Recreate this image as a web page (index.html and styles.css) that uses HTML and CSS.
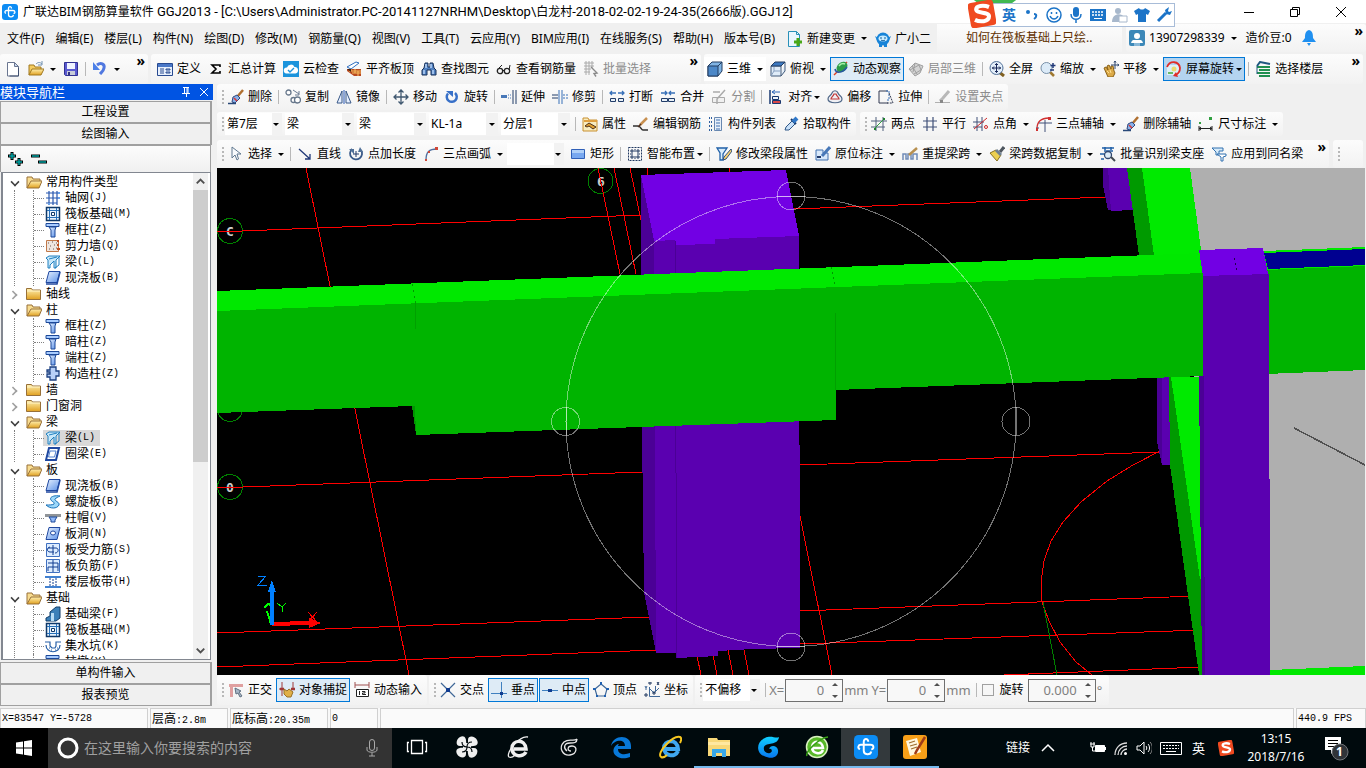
FILE: index.html
```html
<!DOCTYPE html>
<html lang="zh-CN">
<head>
<meta charset="utf-8">
<title>广联达BIM钢筋算量软件 GGJ2013</title>
<link rel="stylesheet" href="styles.css">
</head>
<body>
<svg class="sprite" aria-hidden="true">
<defs>
<linearGradient id="gold" x1="0" y1="0" x2="0" y2="1"><stop offset="0" stop-color="#fff0b0"/><stop offset="1" stop-color="#e0a020"/></linearGradient>
<linearGradient id="sky" x1="0" y1="0" x2="1" y2="1"><stop offset="0" stop-color="#e8f2ff"/><stop offset="1" stop-color="#5a90e8"/></linearGradient>
<linearGradient id="flame" x1="0" y1="0" x2="0" y2="1"><stop offset="0" stop-color="#10d0ff"/><stop offset="1" stop-color="#0878f0"/></linearGradient>
</defs>
<symbol id="app" viewBox="0 0 16 16"><rect width="16" height="16" rx="3" fill="#0c8cf4"/><path d="M9.500 4.500c0-2.500-3-2.500-3 0v6c0 3 4.500 3 5 .5M4 9.500c-2-1-1-3 .5-3H11c2.500 0 2.500 3 .5 3" fill="none" stroke="#fff" stroke-width="1.300"/></symbol>
<symbol id="new" viewBox="0 0 16 16"><path d="M2.500 1.500h7l4 4v9.500h-11z" fill="#fff" stroke="#6a7690"/><path d="M9.500 1.500v4h4z" fill="#c8d8f0" stroke="#6a7690"/><path d="M13.500 7v8h-9" fill="none" stroke="#405070"/></symbol>
<symbol id="open" viewBox="0 0 16 16"><path d="M1 14V4h5l1 2h6v2" fill="#f4cc60" stroke="#a07820"/><path d="M1 14 4 8h12l-3 6z" fill="url(#gold)" stroke="#a07820"/><path d="M8 3c2-2 4-2 6 0M14 0v4h-4" fill="none" stroke="#7090b0"/></symbol>
<symbol id="save" viewBox="0 0 16 16"><path d="M1.500 1.500h13v13h-12l-1-1z" fill="#5a5ad0" stroke="#303090"/><path d="M4 2h8v6H4z" fill="#f0f4ff"/><path d="M4 10h8v4H4z" fill="#c8ccd8"/><path d="M5 11h2v3H5z" fill="#303080"/></symbol>
<symbol id="undo" viewBox="0 0 16 16"><path d="M5 4c4-3 8-1 7 3-.5 3-2 4-4 6" fill="none" stroke="#5078e0" stroke-width="3"/><path d="M1 1v8h7z" fill="#4c80e8"/></symbol>
<symbol id="define" viewBox="0 0 16 16"><path d="M.5 2.500h15v12H.5z" fill="#e8f0fc" stroke="#284a90"/><path d="M1 3h14v3H1z" fill="#4a78c8"/><path d="M3 8h4M3 10h4M3 12h4M9 8h4v1H9zM9 11h4v1H9z" stroke="#284a90" fill="none"/></symbol>
<symbol id="sum" viewBox="0 0 16 16"><path d="M12 6V4H4l4 4-4 4h8v-2" fill="none" stroke="#000" stroke-width="1.600"/></symbol>
<symbol id="cloud" viewBox="0 0 16 16"><path d="M0 0h16v16H0z" fill="#1c94dc"/><path d="M3.500 12.500a3 3 0 0 1 .5-6 4 4 0 0 1 7.500-.5 3.300 3.300 0 0 1 1 6.500z" fill="#fff"/><path d="m5 9 2 2 4-4" fill="none" stroke="#1c94dc" stroke-width="1.400"/></symbol>
<symbol id="flatten" viewBox="0 0 16 16"><path d="m1 6 9-5 3 1-8 6z" fill="#fff" stroke="#3070c0"/><path d="M1 8h14v7H8l-7-5z" fill="#b84820"/><path d="M3 10h12M6 12h9M5 8v2M9 8v4M12 10v5" stroke="#f8c060"/><path d="M1 8h4v3z" fill="#402010"/></symbol>
<symbol id="find" viewBox="0 0 16 16"><path d="M4 2h3v4h2V2h3l1 5 2 2v5h-5V9H6v5H1V9l2-2z" fill="#5080c0" stroke="#183058"/><path d="M3 9v4M12 9v4M5 3v4M10 3v4" stroke="#b8d4f8" stroke-width="1.500"/></symbol>
<symbol id="glasses" viewBox="0 0 16 16"><circle cx="4" cy="10" r="2.700" fill="none" stroke="#222" stroke-width="1.300"/><circle cx="11" cy="10" r="2.700" fill="none" stroke="#222" stroke-width="1.300"/><path d="M7 9.500h1.500M3 7l3-3M13 9l1-5" stroke="#222" fill="none"/></symbol>
<symbol id="batch" viewBox="0 0 16 16"><path d="M1 2h10M1 5h10M1 8h7M1 11h6M3 0v14M6 0v14M9 0v7" stroke="#aaa" fill="none"/><path d="m8 6 6 6-3 .5 2 3" fill="none" stroke="#888" stroke-width="1.400"/></symbol>
<symbol id="cube" viewBox="0 0 16 16"><path d="m1 5 4-4h10v9l-4 5H1z" fill="#80b4e4" stroke="#223c60"/><path d="m1 5h10v10H1z" fill="#4c88c8" stroke="#223c60"/><path d="m11 5 4-4" stroke="#223c60"/></symbol>
<symbol id="topview" viewBox="0 0 16 16"><path d="M1 5v10h10V5zM11 15l4-5V1" fill="#e0ecf8" stroke="#405878"/><path d="m1 5 4-4h10l-4 4z" fill="#3c78c0" stroke="#223c60"/><path d="M4 6v4h6M4 10l-3 5" fill="none" stroke="#88a0c0"/></symbol>
<symbol id="orbit" viewBox="0 0 16 16"><path d="M1 14 14 1" stroke="#e04020" stroke-width="1.500"/><ellipse cx="9" cy="6" rx="6" ry="4.500" transform="rotate(-40 9 6)" fill="#2c9c48"/><path d="M2 8c1 5 8 4 12-2" fill="none" stroke="#2858a0" stroke-width="1.500"/><path d="M6 5c2-3 4-3 6-2" stroke="#a8f0a8" stroke-width="1.500" fill="none"/></symbol>
<symbol id="local3d" viewBox="0 0 16 16"><path d="m1 8 6-6 8 3-3 7-5 3z" fill="#d4d4d4" stroke="#a0a0a0"/><path d="m4 5 5 8M7 2l-2 9M2 9l9-5 2 5-7 4" fill="none" stroke="#a0a0a0"/></symbol>
<symbol id="full" viewBox="0 0 16 16"><path d="m10 11 5 4" stroke="#806020" stroke-width="3"/><circle cx="7.500" cy="7" r="6.500" fill="#e4effa" stroke="#507098"/><path d="M7.500 2.500v9M3 7h9m-6-3 1.500-1.500L9 4m-3 6 1.500 1.500L9 10M5 5.500 3.500 7 5 8.500m5-3L11.500 7 10 8.500" fill="none" stroke="#182858" stroke-width="1"/></symbol>
<symbol id="zoomer" viewBox="0 0 16 16"><path d="m10 11 4 4" stroke="#a07830" stroke-width="2.500"/><circle cx="6.500" cy="7" r="5.500" fill="#dcebf8" stroke="#7890a8"/><path d="M13 2v5M10.500 4.500h5M10 9h4" stroke="#203878" stroke-width="1.500"/></symbol>
<symbol id="pan" viewBox="0 0 16 16"><path d="m1 7 2-1 2 3-1-4 2-1 2 4 0-3 2 0 1 5 1 2-2 4H5z" fill="#dcaa48" stroke="#886018"/><path d="m4 10 2 2M7 9l1 3" stroke="#ffe090"/><path d="M12 0v8M8 4h8m-5-2.500L12 0l1 1.500m1.500 1.500L16 4l-1.500 1" stroke="#304870" fill="none"/></symbol>
<symbol id="screenrot" viewBox="0 0 16 16"><path d="M1 4h13v10H1z" fill="#dcf0f8"/><path d="M1 6C4-1 13 0 14 7c0 4-2 6-5 7" fill="none" stroke="#e02c28" stroke-width="1.800"/><path d="m10 11-3 4 5 1z" fill="#e02c28"/><circle cx="8" cy="8" r="2.500" fill="#ecd870"/><path d="M2 11h5v2H2z" fill="#68b868"/></symbol>
<symbol id="floors" viewBox="0 0 16 16"><path d="m2 5 3-4 10 2" fill="none" stroke="#205880" stroke-width="2"/><path d="M2 6h13M4 9h11M2 12h13M4 15h11" stroke="#209050" stroke-width="1.800"/><path d="M2 5v8" stroke="#205880"/></symbol>
<symbol id="erase" viewBox="0 0 16 16"><path d="m15 1-6 7" stroke="#b07030" stroke-width="2.500"/><path d="m5 8 4-2 3 3-5 5-3-1z" fill="#88b0e8" stroke="#304880"/><path d="M6 9l3 3" stroke="#d83838" stroke-width="1.500"/><path d="M0 14.500h8" stroke="#284878" stroke-width="1.500"/></symbol>
<symbol id="copy" viewBox="0 0 16 16"><g fill="#fff" stroke="#68788c" stroke-width="1.300"><circle cx="3.500" cy="3.500" r="2.500"/><circle cx="8.500" cy="11" r="2.500"/><circle cx="12.500" cy="11" r="3"/></g><path d="m8 1 6 4m0-3v4h-4" fill="none" stroke="#687890"/></symbol>
<symbol id="mirror" viewBox="0 0 16 16"><path d="M6 2v12H1zM10 2v12h5z" fill="#e8f0ff" stroke="#385888"/><path d="M8 1v14" stroke="#2858b8"/></symbol>
<symbol id="move" viewBox="0 0 16 16"><path d="M8 1v14M1 8h14M5.500 3.500 8 1l2.500 2.500m-5 9L8 15l2.500-2.500m-7-7L1 8l2.500 2.500m9-5L15 8l-2.500 2.500" fill="none" stroke="#405870" stroke-width="1.300"/></symbol>
<symbol id="rotate" viewBox="0 0 16 16"><path d="M4 4.500a5 5 0 1 0 7-.5" fill="none" stroke="#3870c8" stroke-width="2.500"/><path d="M2 2h7v6z" fill="#3870c8"/></symbol>
<symbol id="extend" viewBox="0 0 16 16"><path d="M0 6h6v3H0z" fill="#4878b8"/><path d="M7 6h4M7 9h4" stroke="#4878b8" stroke-dasharray="1 1"/><path d="M12 1v14M15 1v14" stroke="#203c68"/></symbol>
<symbol id="trim" viewBox="0 0 16 16"><path d="M0 6h6M0 9h6" stroke="#203c68"/><path d="M7 1v14M10 1v14" stroke="#3870b8"/><path d="M11 6h5M11 9h5" stroke="#3870b8" stroke-dasharray="2 1"/></symbol>
<symbol id="break" viewBox="0 0 16 16"><path d="M1 4h6M9 4h6M3 2 1 4l2 2m10-4 2 2-2 2" fill="none" stroke="#3870b8" stroke-width="1.300"/><path d="M1.500 9.500h5v3h-5zM9.500 9.500h5v3h-5z" fill="#e8f0f8" stroke="#203c68"/></symbol>
<symbol id="join" viewBox="0 0 16 16"><path d="M1 4h6M9 4h6M5 2l2 2-2 2m6-4L9 4l2 2" fill="none" stroke="#3870b8" stroke-width="1.300"/><path d="M1.500 9.500h6v3h-6zM8.500 9.500h6v3h-6z" fill="#e8f0f8" stroke="#203c68"/></symbol>
<symbol id="split" viewBox="0 0 16 16"><path d="M1.500 8.500h12v5h-12z" fill="#f0f0f0" stroke="#aaa"/><path d="M14 1 6 10v5M2 3h7" stroke="#aaa" stroke-width="1.500" fill="none"/></symbol>
<symbol id="align" viewBox="0 0 16 16"><path d="M2 1v14" stroke="#183870" stroke-width="1.500"/><path d="M12 3H4m3-2L4 3l3 2" fill="none" stroke="#3068b8"/><path d="M4.500 7.500h6v3h-6z" fill="#f0f4fa" stroke="#183870"/><path d="M4.500 11.500h8v3h-8z" fill="#d84848" stroke="#183870"/></symbol>
<symbol id="offset" viewBox="0 0 16 16"><path d="M1 10c0-3 3-3 4-6 1-3 5-3 6 0 1 3 4 3 4 6 0 5-14 5-14 0z" fill="#f0f0f4" stroke="#506888" stroke-width="1.200"/><path d="M4 10c0-2 2-2 3-5h2c1 3 3 3 3 5z" fill="none" stroke="#c03838" stroke-width="1.200"/></symbol>
<symbol id="stretch" viewBox="0 0 16 16"><path d="M10 2H1v12h9" fill="none" stroke="#303850"/><path d="M8 2h3v9H8" fill="none" stroke="#3870b8" stroke-dasharray="2 1"/><path d="m11 4 4 10H9" fill="none" stroke="#303850" stroke-dasharray="2 1"/></symbol>
<symbol id="grip" viewBox="0 0 16 16"><path d="M14 2 8 9l-3 3" stroke="#b8b8b8" stroke-width="3"/><path d="M0 13.500h5M8 13.500h7" stroke="#b0b0b0"/><path d="M5 11h3v3H5z" fill="#888"/></symbol>
<symbol id="props" viewBox="0 0 16 16"><path d="M1 2h5l1 2h8v11H1z" fill="#f8ecc0" stroke="#c89030"/><path d="M2 5h13" stroke="#e0a040" stroke-width="2"/><path d="m3 10 4-3 7 4-3 2-4-3-2 1z" fill="#e0a030" stroke="#503018"/></symbol>
<symbol id="editbar" viewBox="0 0 16 16"><path d="M0 10h5c3 0 3 4 5 4h5" fill="none" stroke="#303030" stroke-width="1.500"/><path d="m14 2-7 7" stroke="#c89050" stroke-width="2.500"/><path d="m8 8-3 3" stroke="#503020" stroke-width="1.500"/></symbol>
<symbol id="complist" viewBox="0 0 16 16"><path d="M1 2h3M1 6h3M1 10h3M1 14h3" stroke="#3060a0" stroke-width="2" stroke-dasharray="1 1"/><path d="M6.500 1.500h7v13h-7z" fill="#e8f0fa" stroke="#6888b0"/><path d="M8 4h4M8 7h4M8 10h4M8 13h4" stroke="#4070b0"/></symbol>
<symbol id="dropper" viewBox="0 0 16 16"><path d="m2 14 1-3 6-6 3 3-6 6z" fill="#c8e0f8" stroke="#305888"/><path d="m8 3 5 5" stroke="#183868" stroke-width="2"/><path d="m10 6 4-4" stroke="#3078c8" stroke-width="4"/></symbol>
<symbol id="twopt" viewBox="0 0 16 16"><path d="M0 5h16M0 11h14M5 1v14M12 1v14" stroke="#50607c"/><path d="M3 13 13 3" stroke="#30a040"/><path d="M3 12h2v2H3zM12 2h2v2h-2z" fill="#208030"/></symbol>
<symbol id="parallel" viewBox="0 0 16 16"><path d="M1 5h14M1 11h14M5 1v14M11 1v14" stroke="#405078" stroke-width="1.200"/></symbol>
<symbol id="angle" viewBox="0 0 16 16"><path d="M0 6h11M0 11h9M4 1v14M9 1v14" stroke="#405078"/><path d="M1 13 14 2" stroke="#d02828"/><circle cx="13" cy="11" r="1.500" fill="none" stroke="#d02828"/></symbol>
<symbol id="arcaxis" viewBox="0 0 16 16"><path d="M1 13C1 6 5 2 13 2" fill="none" stroke="#d03030" stroke-width="1.300"/><path d="M3 7h13M9 4v12M0 12h3" stroke="#405078"/><path d="M12 1h3v3h-3zM0 12h2v3H0z" fill="#d03030"/></symbol>
<symbol id="dim" viewBox="0 0 16 16"><path d="M1 10v5M14 10v5M1 12.500h13M3 11l-2 1.500L3 14m9-3 2 1.500-2 1.500" fill="none" stroke="#222"/><path d="M11 1h3v3h-3zM1 6h2v2H1z" fill="#30a040"/></symbol>
<symbol id="cursor" viewBox="0 0 16 16"><path d="M4 1v11l3-3 2 5 1.500-1L9 8h4z" fill="#f8fafc" stroke="#607890"/></symbol>
<symbol id="line" viewBox="0 0 16 16"><path d="m2 3 11 10m0-5v5H8" fill="none" stroke="#203878" stroke-width="1.300"/></symbol>
<symbol id="ptlen" viewBox="0 0 16 16"><path d="M4 3a6 6 0 1 0 9 1" fill="none" stroke="#385888" stroke-width="1.800"/><path d="M1 3h5v5M10 6h5l-3-5z" fill="#507098"/><path d="M8 5v6M5 8h6" stroke="#203868"/></symbol>
<symbol id="arc" viewBox="0 0 16 16"><path d="M3 14C3 6 6 3 14 3" fill="none" stroke="#5070a0" stroke-width="1.300"/><path d="M2 13h2v2H2zM5 5h2v2H5zM12 1h3v3h-3z" fill="#d04838"/></symbol>
<symbol id="rect" viewBox="0 0 16 16"><path d="M1.500 3.500h13v9h-13z" fill="#78a8f0" stroke="#3060b8"/><path d="M2 4h12v3H2z" fill="#b0d0f8"/></symbol>
<symbol id="smart" viewBox="0 0 16 16"><path d="M1.500 1.500h13v13h-13z" fill="none" stroke="#203860" stroke-dasharray="2 1"/><path d="M8 3v3M8 10v3M3 8h3M10 8h3M4 4h2v2H4zM10 4h2v2h-2zM4 10h2v2H4zM10 10h2v2h-2z" stroke="#203860" fill="none"/></symbol>
<symbol id="modseg" viewBox="0 0 16 16"><path d="M1 2h10L7 8v6H4V7z" fill="#d8ecfa" stroke="#2060a8" stroke-width="1.300"/><path d="M15 3 8 11l-1 3 3-1 6-8z" stroke="#305078" fill="#f8d070"/></symbol>
<symbol id="inplace" viewBox="0 0 16 16"><path d="M1 4h7v3h5v7H1z" fill="#d8e8fa" stroke="#4070b0"/><path d="m15 1-8 9" stroke="#4878b8" stroke-width="3"/><path d="M2 11h4" stroke="#203868" stroke-width="2"/></symbol>
<symbol id="relift" viewBox="0 0 16 16"><path d="M1 14V8h3v5h2V8h3v5h2V8h4v6" fill="none" stroke="#708cb8" stroke-width="1.500"/><path d="m15 2-8 7" stroke="#b89050" stroke-width="2.500"/></symbol>
<symbol id="brush" viewBox="0 0 16 16"><path d="m15 1-4 5" stroke="#505860" stroke-width="3"/><path d="m7 4 5 5-4 6-7-8z" fill="#ecd050" stroke="#887020"/><path d="m7 4 5 5" stroke="#708090" stroke-width="3"/></symbol>
<symbol id="recog" viewBox="0 0 16 16"><path d="M2 2h12M4 5h9M0 8h4M1 13h3M5 1v3M11 1v3" stroke="#2060a8" stroke-width="1.500"/><circle cx="8" cy="9" r="3.500" fill="#dcecf8" stroke="#304870" stroke-width="1.300"/><path d="m11 11 4 4" stroke="#404850" stroke-width="2"/></symbol>
<symbol id="apply" viewBox="0 0 16 16"><path d="M1 2h11v3H8v4H5V6z" fill="#d8ecfa" stroke="#3070b0"/><path d="M6 8h9v2l-3 1v4h-2v-4z" fill="#fff" stroke="#3070b0"/></symbol>
<symbol id="newchg" viewBox="0 0 16 16"><path d="M1.500.5h8l3 3v12h-11z" fill="#eaf6ff" stroke="#2890b8"/><path d="M9.500.5v3h3" fill="none" stroke="#2890b8"/><path d="M11 7v8M7 11h8" stroke="#48a818" stroke-width="3"/></symbol>
<symbol id="robot" viewBox="0 0 16 16"><circle cx="8" cy="8" r="6.500" fill="#1884d8"/><path d="M0 5l3 2v5zM16 5l-3 2v5zM4 13h3v3H4zM9 13h3v3H9z" fill="#1884d8"/><ellipse cx="8" cy="7.500" rx="4.500" ry="3" fill="#c8ecff"/><path d="M6 6v2M10 6v2M6 9c1 1 3 1 4 0" stroke="#1060a0" fill="none"/></symbol>
<symbol id="user" viewBox="0 0 16 16"><rect width="16" height="16" rx="2" fill="#3c88b8"/><circle cx="8" cy="6" r="3" fill="#fff"/><path d="M2 13c1-4 3-3 6-3s5-1 6 3z" fill="#fff"/><path d="M5 13h6v3H5z" fill="#88b8d8"/></symbol>
<symbol id="bell" viewBox="0 0 16 16"><path d="M8 0c4 1 4 5 4 8l3 4H1l3-4c0-3 0-7 4-8z" fill="#2090f0"/><path d="M6 13h4l-2 3z" fill="#2090f0"/></symbol>
<symbol id="fold-open" viewBox="0 0 16 16"><path d="M1 14V3h5l1 2h7v3" fill="#f8dc90" stroke="#987038"/><path d="m1 14 4-7h11l-3 7z" fill="url(#gold)" stroke="#987038"/></symbol>
<symbol id="fold" viewBox="0 0 16 16"><path d="M.5 13.500v-11h5l1 1.500h8v9.500z" fill="url(#gold)" stroke="#987038"/><path d="M1 5h13" stroke="#fff4c8"/></symbol>
<symbol id="t-grid" viewBox="0 0 16 16"><path d="M1 3h14M1 8h14M1 13h11M4 1v14M8 1v14M12 1v14" stroke="#2858b0" stroke-width="1.200"/><path d="M13 2h2v2h-2zM13 7h2v2h-2zM3 13h2v2H3z" fill="#68a0e8"/></symbol>
<symbol id="t-raft" viewBox="0 0 16 16"><path d="M1.500 1.500h13v13h-13z" fill="#e8f4ff" stroke="#103868" stroke-width="1.500"/><path d="M4.500 2v12M11.500 2v12M2 4.500h12M2 11.500h12" stroke="#2870b8"/><path d="M6.500 6.500h3v3h-3z" fill="#fff" stroke="#103868"/></symbol>
<symbol id="t-col" viewBox="0 0 16 16"><path d="M1 1.500h13v3H1z" fill="#a8ccff" stroke="#1c4898"/><path d="M4 5h7l-1 3v7H6V8z" fill="url(#sky)" stroke="#1c4898"/></symbol>
<symbol id="t-wall" viewBox="0 0 16 16"><path d="M1.500 2.500h12v11h-12z" fill="#eee6e0" stroke="#c07848"/><path d="M3 5h1M7 4h1M5 8h1M9 7h1M4 11h1M8 11h1M11 10h1M11 5h1" stroke="#705850"/><path d="M12 3h2M12 7h2M12 11h3" stroke="#c05020" stroke-width="2"/></symbol>
<symbol id="t-beam" viewBox="0 0 16 16"><path d="M1 4 4 2h11l-4 4v8H9V7l-4 4v3H3V6z" fill="#c8e8fa" stroke="#2080c0"/><path d="m4 5 8-2M10 14l4-3V3" fill="none" stroke="#2080c0"/></symbol>
<symbol id="t-slab" viewBox="0 0 16 16"><path d="M4 1.500h11l-3 11H1z" fill="url(#sky)" stroke="#2048a0"/><path d="M1 14h11l3-12" fill="none" stroke="#2048a0" stroke-width="1.500"/></symbol>
<symbol id="t-ring" viewBox="0 0 16 16"><path d="M4 2h10l-3 12H1z" fill="#fff" stroke="#2048a0" stroke-width="2"/><path d="M5 5h6l-1.500 6H3.500z" fill="none" stroke="#5080d0"/></symbol>
<symbol id="t-build" viewBox="0 0 16 16"><path d="M5 1h6v4h3v5h-3v4H5v-3H2V8h3V6H2V4h3z" fill="#b8d0f8" stroke="#1c4080" stroke-width="1.300"/></symbol>
<symbol id="t-spiral" viewBox="0 0 16 16"><path d="M15 2C9 1 4 3 6 6c1 2 4 2 3 4-1 1-5 1-8 1 4 4 11 4 13 0 1-3-5-4-4-6 1-1 3-2 5-3z" fill="#9cd8fa" stroke="#1870b8"/></symbol>
<symbol id="t-cap" viewBox="0 0 16 16"><path d="M0 4h16v3H0z" fill="#909498"/><path d="M4 7h8l-2 3v2H6v-2z" fill="#90b8f8" stroke="#1c4898"/></symbol>
<symbol id="t-hole" viewBox="0 0 16 16"><path d="M4 1.500h11l-3 12H1z" fill="url(#sky)" stroke="#2048a0"/><ellipse cx="8" cy="7" rx="2.500" ry="2" fill="#fff" stroke="#2048a0"/></symbol>
<symbol id="t-force" viewBox="0 0 16 16"><path d="M1.500 1.500h13v13h-13z" fill="#dcecff" stroke="#4070c0"/><path d="M3 6h8c3 0 3 5-1 5M5 5c-4 1-3 5 0 5h4M8 3v10" fill="none" stroke="#103c90"/></symbol>
<symbol id="t-neg" viewBox="0 0 16 16"><path d="M1.500 1.500h13v13h-13z" fill="#dcecff" stroke="#4070c0"/><path d="M3 5h10v8M3 9h10M8 2v12M3 9v4" fill="none" stroke="#103c90"/></symbol>
<symbol id="t-strip" viewBox="0 0 16 16"><path d="M0 2h16v2H0zM0 12h16v2H0z" fill="#4080d0"/><path d="M5 4v8M11 4v8M8 5v7" stroke="#103c90" stroke-dasharray="2 1"/></symbol>
<symbol id="t-fbeam" viewBox="0 0 16 16"><path d="M1 15v-3l4-2V6l6-5h4v11l-4 3z" fill="#3c80b8" stroke="#103c68"/><path d="M6 7h3v8H6z" fill="#b8dcf4"/></symbol>
<symbol id="t-pit" viewBox="0 0 16 16"><path d="M0 4h5v4l2 2h3l1-2V4h5M1 7c0 9 14 9 14 0" fill="none" stroke="#2860a8" stroke-width="1.200"/><path d="M4 10h1M6 12h1M10 12h1M12 10h1" stroke="#2860a8"/></symbol>
<symbol id="ortho" viewBox="0 0 16 16"><path d="M1 2h14v3H5v10H2V5H1z" fill="#e0a0a0"/><path d="m7 6 6 3-2 1 3 4-2 1-2-4-2 1z" fill="#a8b8c8" stroke="#607080"/></symbol>
<symbol id="snap" viewBox="0 0 16 16"><path d="M3 0v14M14 0v8M0 7h5" stroke="#a03838"/><path d="M1 7h4M12 7h4" stroke="#a03838" stroke-width="2.500"/><path d="m5 7 3 2 2-2 4 3-2 5H8l-3-3z" fill="#e0b048" stroke="#987028"/></symbol>
<symbol id="dyn" viewBox="0 0 16 16"><path d="M1 0v6M15 0v6M1 3h14" stroke="#a05050"/><path d="M2.500 7.500h12v7h-12z" fill="#fff" stroke="#222"/><path d="M5.500 9v4M8 9.500h3v1.500H8.500v1.500H12" stroke="#222" fill="none"/></symbol>
<symbol id="cross" viewBox="0 0 16 16"><path d="M1 1l14 14M15 1 1 15" stroke="#406898" stroke-width="1.200"/><path d="M6 6h4v4H6z" fill="#103c90"/></symbol>
<symbol id="perp" viewBox="0 0 16 16"><path d="M10.500 0v16M0 11.500h16" stroke="#4080c0"/><path d="M9 10h3v3H9z" fill="#103c90"/></symbol>
<symbol id="mid" viewBox="0 0 16 16"><path d="M0 8.500h16" stroke="#4080c0"/><path d="M6 7h4v3H6z" fill="#103c90"/></symbol>
<symbol id="vertex" viewBox="0 0 16 16"><path d="m8 2 6 5-2 7H4L2 7z" fill="none" stroke="#406898" stroke-width="1.200"/><path d="M7 0h2v3H7zM0 6h3v2H0zM13 6h3v2h-3zM3 13h2v2H3zM11 13h2v2h-2z" fill="#2060b0"/></symbol>
<symbol id="coord" viewBox="0 0 16 16"><path d="M5.500 5v9.500H16M6 7l4 4 5-5M1 4l1 2 1-2M2 6v2M11.500 4v5" fill="none" stroke="#406898"/><path d="M5 0h2v2H5zM1 12h2v2H1zM13 0l2 3M15 0l-2 3M9 10h2v2H9z" stroke="#203860" fill="none"/></symbol>
<symbol id="sogou" viewBox="0 0 24 24"><rect x="1" y="1" width="22" height="22" rx="3" transform="rotate(-10 12 12)" fill="#f04a20"/><path d="M18 6c-5-2-11-1-11 2 0 4 11 2 11 6 0 5-8 5-12 3" fill="none" stroke="#fff" stroke-width="3.500"/></symbol>
</svg>

<header class="title">
 <svg class="ic"><use href="#app"/></svg>
 <h1>广联达BIM钢筋算量软件 <span>GGJ2013 - [C:\Users\Administrator.PC-20141127NRHM\Desktop\</span>白龙村<span>-2018-02-02-19-24-35(2666</span>版<span>).GGJ12]</span></h1>
 <div class="winbtns">
  <button aria-label="最小化"><svg viewBox="0 0 12 12"><path d="M1 6.500h10"/></svg></button>
  <button aria-label="还原"><svg viewBox="0 0 12 12"><path d="M1.500 3.500h7v7h-7zM3.500 3V1.500h7v7H9"/></svg></button>
  <button aria-label="关闭"><svg viewBox="0 0 12 12"><path d="m1 1 10 10M11 1 1 11"/></svg></button>
 </div>
 <span class="orb"></span>
 <div class="ime">
  <svg class="logo"><use href="#sogou"/></svg>
  <b>英</b>
  <svg viewBox="0 0 16 16"><circle cx="4" cy="5" r="2" fill="#1c74c8"/><path d="M10 7c3 0 3 3 0 5" fill="none" stroke="#1c74c8" stroke-width="2"/></svg>
  <svg viewBox="0 0 16 16"><circle cx="8" cy="8" r="7" fill="none" stroke="#1c74c8" stroke-width="1.500"/><path d="M5.500 5v2M10.500 5v2M4 9c2 4 6 4 8 0" fill="none" stroke="#1c74c8" stroke-width="1.500"/></svg>
  <svg viewBox="0 0 16 16"><rect x="5" y="0" width="6" height="10" rx="3" fill="#1c74c8"/><path d="M3 7c0 7 10 7 10 0M8 12v4" fill="none" stroke="#1c74c8" stroke-width="1.500"/></svg>
  <svg viewBox="0 0 16 16"><path d="M0 2h16v12H0z" fill="#1c74c8"/><path d="M2 5h12M2 8h12" stroke="#fff" stroke-width="1.500" stroke-dasharray="2 1"/><path d="M4 11.500h8" stroke="#fff"/></svg>
  <svg viewBox="0 0 16 16"><circle cx="6" cy="4" r="3" fill="#a8b8cc"/><path d="M0 15c0-9 9-9 11-6v6z" fill="#a8b8cc"/><path d="M7 9h8v6H7z" fill="#fff" stroke="#a8b8cc"/></svg>
  <svg viewBox="0 0 16 16"><path d="m0 4 5-3c1 2 5 2 6 0l5 3-2 4-2-1v8H4V7L2 8z" fill="#1c74c8"/></svg>
  <svg viewBox="0 0 16 16"><path d="m2 14 8-8" stroke="#1c74c8" stroke-width="3"/><path d="M13 0 9 3l1 4 4 1 2-4-3 1-1-1z" fill="#1c74c8"/></svg>
 </div>
</header>

<nav class="menu">
 <div class="menus">
 <button>文件(F)</button><button>编辑(E)</button><button>楼层(L)</button><button>构件(N)</button><button>绘图(D)</button><button>修改(M)</button><button>钢筋量(Q)</button><button>视图(V)</button><button>工具(T)</button><button>云应用(Y)</button><button>BIM应用(I)</button><button>在线服务(S)</button><button>帮助(H)</button><button>版本号(B)</button>
 </div>
 <button class="tb"><svg class="ic"><use href="#newchg"/></svg>新建变更<i class="dd far"></i></button>
 <button class="tb"><svg class="ic"><use href="#robot"/></svg>广小二</button>
 <a class="tip" href="#">如何在筏板基础上只绘..</a>
 <div class="panel acct">
  <button class="tb"><svg class="ic"><use href="#user"/></svg>13907298339<i class="dd far"></i></button>
  <button class="tb">造价豆:0</button>
  <button class="tb" aria-label="通知"><svg class="ic"><use href="#bell"/></svg></button>
  <button class="more" aria-label="更多">»</button>
 </div>
</nav>

<div class="row main">
 <div class="panel files">
  <button class="tb" aria-label="新建"><svg class="ic"><use href="#new"/></svg></button>
  <button class="tb" aria-label="打开"><svg class="ic"><use href="#open"/></svg><i class="dd far"></i></button>
  <button class="tb" aria-label="保存"><svg class="ic"><use href="#save"/></svg></button>
  <hr>
  <button class="tb" aria-label="撤销"><svg class="ic"><use href="#undo"/></svg><i class="dd far"></i></button>
  <button class="more" aria-label="更多">»</button>
 </div>
 <div class="panel calc">
  <button class="tb"><svg class="ic"><use href="#define"/></svg>定义</button>
  <button class="tb"><svg class="ic"><use href="#sum"/></svg>汇总计算</button>
  <button class="tb"><svg class="ic"><use href="#cloud"/></svg>云检查</button>
  <button class="tb"><svg class="ic"><use href="#flatten"/></svg>平齐板顶</button>
  <button class="tb"><svg class="ic"><use href="#find"/></svg>查找图元</button>
  <button class="tb"><svg class="ic"><use href="#glasses"/></svg>查看钢筋量</button>
  <button class="tb" disabled><svg class="ic"><use href="#batch"/></svg>批量选择</button>
  <button class="more" aria-label="更多">»</button>
 </div>
 <div class="panel views">
  <button class="tb white"><svg class="ic"><use href="#cube"/></svg>三维<i class="dd far"></i></button>
  <button class="tb"><svg class="ic"><use href="#topview"/></svg>俯视<i class="dd far"></i></button>
  <button class="tb on"><svg class="ic"><use href="#orbit"/></svg>动态观察</button>
  <button class="tb" disabled><svg class="ic"><use href="#local3d"/></svg>局部三维</button>
  <hr>
  <button class="tb"><svg class="ic"><use href="#full"/></svg>全屏</button>
  <button class="tb"><svg class="ic"><use href="#zoomer"/></svg>缩放<i class="dd far"></i></button>
  <button class="tb"><svg class="ic"><use href="#pan"/></svg>平移<i class="dd far"></i></button>
  <button class="tb on deep"><svg class="ic"><use href="#screenrot"/></svg>屏幕旋转<i class="dd"></i></button>
  <hr>
  <button class="tb"><svg class="ic"><use href="#floors"/></svg>选择楼层</button>
  <button class="more" aria-label="更多">»</button>
 </div>
</div>

<div class="work">
 <aside class="side">
  <div class="sidehead"><h2>模块导航栏</h2>
   <svg viewBox="0 0 12 12"><path d="M3 1.500h6M4.500 1v6M8 1v6M7 1v6M2 7.500h8M6.500 7v4"/></svg>
   <svg viewBox="0 0 12 12"><path d="m2 2 8 8M10 2l-8 8"/></svg>
  </div>
  <button class="nav">工程设置</button>
  <button class="nav">绘图输入</button>
  <div class="treebar">
   <button aria-label="全部展开"><svg viewBox="0 0 18 18"><path d="M5 2v8M1 6h8M12 8v8M8 12h8" stroke="#000" stroke-width="3"/><path d="M5 3v6M2 6h6M12 9v6M9 12h6" stroke="#00a0a0" stroke-width="1.500"/></svg></button>
   <button aria-label="全部折叠"><svg viewBox="0 0 18 18"><path d="M1 6h9M8 12h9" stroke="#000" stroke-width="3"/><path d="M2 6h7M9 12h7" stroke="#00a0a0" stroke-width="1.500"/></svg></button>
  </div>
  <div class="treebox">
   <ul class="tree">
    <li class="open"><span class="node"><svg class="ic"><use href="#fold-open"/></svg>常用构件类型</span>
     <ul>
      <li><span class="leaf"><svg class="ic"><use href="#t-grid"/></svg>轴网<kbd>(J)</kbd></span></li>
      <li><span class="leaf"><svg class="ic"><use href="#t-raft"/></svg>筏板基础<kbd>(M)</kbd></span></li>
      <li><span class="leaf"><svg class="ic"><use href="#t-col"/></svg>框柱<kbd>(Z)</kbd></span></li>
      <li><span class="leaf"><svg class="ic"><use href="#t-wall"/></svg>剪力墙<kbd>(Q)</kbd></span></li>
      <li><span class="leaf"><svg class="ic"><use href="#t-beam"/></svg>梁<kbd>(L)</kbd></span></li>
      <li><span class="leaf"><svg class="ic"><use href="#t-slab"/></svg>现浇板<kbd>(B)</kbd></span></li>
     </ul></li>
    <li class="shut"><span class="node"><svg class="ic"><use href="#fold"/></svg>轴线</span></li>
    <li class="open"><span class="node"><svg class="ic"><use href="#fold-open"/></svg>柱</span>
     <ul>
      <li><span class="leaf"><svg class="ic"><use href="#t-col"/></svg>框柱<kbd>(Z)</kbd></span></li>
      <li><span class="leaf"><svg class="ic"><use href="#t-col"/></svg>暗柱<kbd>(Z)</kbd></span></li>
      <li><span class="leaf"><svg class="ic"><use href="#t-col"/></svg>端柱<kbd>(Z)</kbd></span></li>
      <li><span class="leaf"><svg class="ic"><use href="#t-build"/></svg>构造柱<kbd>(Z)</kbd></span></li>
     </ul></li>
    <li class="shut"><span class="node"><svg class="ic"><use href="#fold"/></svg>墙</span></li>
    <li class="shut"><span class="node"><svg class="ic"><use href="#fold"/></svg>门窗洞</span></li>
    <li class="open"><span class="node"><svg class="ic"><use href="#fold-open"/></svg>梁</span>
     <ul>
      <li><span class="leaf sel"><svg class="ic"><use href="#t-beam"/></svg>梁<kbd>(L)</kbd></span></li>
      <li><span class="leaf"><svg class="ic"><use href="#t-ring"/></svg>圈梁<kbd>(E)</kbd></span></li>
     </ul></li>
    <li class="open"><span class="node"><svg class="ic"><use href="#fold-open"/></svg>板</span>
     <ul>
      <li><span class="leaf"><svg class="ic"><use href="#t-slab"/></svg>现浇板<kbd>(B)</kbd></span></li>
      <li><span class="leaf"><svg class="ic"><use href="#t-spiral"/></svg>螺旋板<kbd>(B)</kbd></span></li>
      <li><span class="leaf"><svg class="ic"><use href="#t-cap"/></svg>柱帽<kbd>(V)</kbd></span></li>
      <li><span class="leaf"><svg class="ic"><use href="#t-hole"/></svg>板洞<kbd>(N)</kbd></span></li>
      <li><span class="leaf"><svg class="ic"><use href="#t-force"/></svg>板受力筋<kbd>(S)</kbd></span></li>
      <li><span class="leaf"><svg class="ic"><use href="#t-neg"/></svg>板负筋<kbd>(F)</kbd></span></li>
      <li><span class="leaf"><svg class="ic"><use href="#t-strip"/></svg>楼层板带<kbd>(H)</kbd></span></li>
     </ul></li>
    <li class="open"><span class="node"><svg class="ic"><use href="#fold-open"/></svg>基础</span>
     <ul>
      <li><span class="leaf"><svg class="ic"><use href="#t-fbeam"/></svg>基础梁<kbd>(F)</kbd></span></li>
      <li><span class="leaf"><svg class="ic"><use href="#t-raft"/></svg>筏板基础<kbd>(M)</kbd></span></li>
      <li><span class="leaf"><svg class="ic"><use href="#t-pit"/></svg>集水坑<kbd>(K)</kbd></span></li>
      <li><span class="leaf"><svg class="ic"><use href="#t-col"/></svg>柱墩<kbd>(Y)</kbd></span></li>
     </ul></li>
   </ul>
   <div class="scroll"><svg viewBox="0 0 16 16"><path d="m4 10 4-4 4 4"/></svg><span class="thumb"></span><svg viewBox="0 0 16 16"><path d="m4 6 4 4 4-4"/></svg></div>
  </div>
  <button class="nav">单构件输入</button>
  <button class="nav">报表预览</button>
 </aside>

 <main class="canvas">
  <div class="row edit">
   <div class="panel"><i class="grip"></i>
    <button class="tb"><svg class="ic"><use href="#erase"/></svg>删除</button>
    <hr>
    <button class="tb"><svg class="ic"><use href="#copy"/></svg>复制</button>
    <button class="tb"><svg class="ic"><use href="#mirror"/></svg>镜像</button>
    <hr>
    <button class="tb"><svg class="ic"><use href="#move"/></svg>移动</button>
    <button class="tb"><svg class="ic"><use href="#rotate"/></svg>旋转</button>
    <hr>
    <button class="tb"><svg class="ic"><use href="#extend"/></svg>延伸</button>
    <button class="tb"><svg class="ic"><use href="#trim"/></svg>修剪</button>
    <hr>
    <button class="tb"><svg class="ic"><use href="#break"/></svg>打断</button>
    <button class="tb"><svg class="ic"><use href="#join"/></svg>合并</button>
    <button class="tb" disabled><svg class="ic"><use href="#split"/></svg>分割</button>
    <hr>
    <button class="tb"><svg class="ic"><use href="#align"/></svg>对齐<i class="dd"></i></button>
    <button class="tb"><svg class="ic"><use href="#offset"/></svg>偏移</button>
    <button class="tb"><svg class="ic"><use href="#stretch"/></svg>拉伸</button>
    <hr>
    <button class="tb" disabled><svg class="ic"><use href="#grip"/></svg>设置夹点</button>
   </div>
  </div>
  <div class="row pick">
   <div class="panel"><i class="grip"></i>
    <span class="combo short"><select aria-label="楼层"><option>第7层</option></select></span>
    <span class="combo"><select aria-label="构件类别"><option>梁</option></select></span>
    <span class="combo"><select aria-label="构件类型"><option>梁</option></select></span>
    <span class="combo"><select aria-label="构件"><option>KL-1a</option></select></span>
    <span class="combo"><select aria-label="分层"><option>分层1</option></select></span>
    <hr>
    <button class="tb"><svg class="ic"><use href="#props"/></svg>属性</button>
    <button class="tb"><svg class="ic"><use href="#editbar"/></svg>编辑钢筋</button>
    <button class="tb"><svg class="ic"><use href="#complist"/></svg>构件列表</button>
    <button class="tb"><svg class="ic"><use href="#dropper"/></svg>拾取构件</button>
   </div>
   <div class="panel"><i class="grip"></i>
    <button class="tb"><svg class="ic"><use href="#twopt"/></svg>两点</button>
    <button class="tb"><svg class="ic"><use href="#parallel"/></svg>平行</button>
    <button class="tb"><svg class="ic"><use href="#angle"/></svg>点角<i class="dd far"></i></button>
    <button class="tb"><svg class="ic"><use href="#arcaxis"/></svg>三点辅轴<i class="dd far"></i></button>
    <button class="tb"><svg class="ic"><use href="#erase"/></svg>删除辅轴</button>
    <button class="tb"><svg class="ic"><use href="#dim"/></svg>尺寸标注<i class="dd far"></i></button>
   </div>
  </div>
  <div class="row draw">
   <div class="panel grow"><i class="grip"></i>
    <button class="tb"><svg class="ic"><use href="#cursor"/></svg>选择<i class="dd far"></i></button>
    <hr>
    <button class="tb"><svg class="ic"><use href="#line"/></svg>直线</button>
    <button class="tb"><svg class="ic"><use href="#ptlen"/></svg>点加长度</button>
    <button class="tb"><svg class="ic"><use href="#arc"/></svg>三点画弧<i class="dd far"></i></button>
    <span class="combo short"><select aria-label="绘制方式"><option></option></select></span>
    <button class="tb"><svg class="ic"><use href="#rect"/></svg>矩形</button>
    <hr>
    <button class="tb"><svg class="ic"><use href="#smart"/></svg>智能布置<i class="dd"></i></button>
    <hr>
    <button class="tb"><svg class="ic"><use href="#modseg"/></svg>修改梁段属性</button>
    <button class="tb"><svg class="ic"><use href="#inplace"/></svg>原位标注<i class="dd far"></i></button>
    <button class="tb"><svg class="ic"><use href="#relift"/></svg>重提梁跨<i class="dd far"></i></button>
    <button class="tb"><svg class="ic"><use href="#brush"/></svg>梁跨数据复制<i class="dd far"></i></button>
    <button class="tb"><svg class="ic"><use href="#recog"/></svg>批量识别梁支座</button>
    <button class="tb"><svg class="ic"><use href="#apply"/></svg>应用到同名梁</button>
    <button class="more" aria-label="更多">»</button>
   </div>
   <div class="panel stub"><i class="grip"></i></div>
  </div>

  <svg class="scene" viewBox="217 168 1148 507" preserveAspectRatio="xMinYMin slice" role="img" aria-label="三维视图" shape-rendering="crispEdges">
   <path fill="#000" d="M217 168h1148v507H217z"/>
   <g fill="none" stroke="#008000"><circle cx="230" cy="231" r="12.500"/><circle cx="600.500" cy="181" r="12.500"/><circle cx="230" cy="487" r="12.500"/><circle cx="230" cy="409" r="12.500"/></g>
   <g fill="#ccc" class="axisno"><text x="230" y="236">C</text><text x="601" y="186">6</text><text x="230" y="492">0</text></g>
   <g fill="none" stroke="#f00">
    <path d="M306 168 409 675M217 232 641 215M794 209l312-12M598 168l22 106M614 168l22 106M630 168l11 52M647 168l1 8M729 168v4"/>
    <path d="M217 488l425-16M800 465l360-13M217 633l432-16M800 611l396-15M217 667l439-17M800 644l402-14M1004 675l198-8"/>
    <path d="M697 656l4 19M713 655l4 20M728 650l5 25M744 650l5 25M800 516l32 159"/>
    <path d="M1160 451 1133 465 1107 481 1081 502 1063 522 1051 541 1044 561 1041 582 1042 602 1049 621 1060 642 1076 662 1092 675"/>
   </g>
   <path d="m1043 602 14 73" stroke="#008000"/>
   <path fill="#4b0096" d="M641 175l14 66 1 412-12-61-2-160z"/>
   <path fill="#5a00b0" d="M654 240l145-6 1 414-47 1-35 2v5l-41 2v-5h-21z"/>
   <path fill="#7200e4" d="M641 175l145-5 13 66-84 3v5l-40 1v-5l-21 1z"/>
   <path d="M675.500 241v232M676.500 473v185" stroke="#4b0096"/>
   <path fill="#afafaf" d="M1188 168h177v507h-165l-8-400z"/>
   <path fill="#4b0096" d="M1103 168h5l3 42h-3l-5-25z"/>
   <path fill="#5a00b0" d="M1108 168h20l5 42-22 1z"/>
   <path fill="#009a00" d="M1127 168h15l12 88h-15z"/>
   <path fill="#00ea00" d="M1142 168h48l11 82v6h-47z"/>
   <path d="M1157 377h5v88l-5-23z" fill="#4b0096"/><path d="M1162 377h8v88h-8z" fill="#5a00b0"/>
   <path d="m1169 377 1 88 29 210h4V377z" fill="#009a00"/>
   <path d="M1171 377h30v202h-1z" fill="#00ea00"/>
   <path fill="#00e800" d="M217 291l985-38v21l-985 37z"/>
   <path fill="#00b400" d="M217 311l986-38v103l-367 14v30l-420 15-4-29-195 7z"/>
   <path fill="#009600" d="M412 406h3l1 29z"/>
   <path d="M412 284l3 17" stroke="#009600" stroke-dasharray="2 4"/><path d="M415.500 301v28M835.500 313v77" stroke="#00a000"/>
   <path d="M831 267l4 20" stroke="#009600" stroke-dasharray="2 3"/>
   <path fill="#00e800" d="M1264 251l101-4v20l-101 4z"/><path fill="#00b400" d="M1266 270l99-4v104l-99 4z"/><path fill="#000090" d="M1264 253l101-4v16l-97 4z"/>
   <path fill="#00e800" d="M1270 670l95-4v9h-95z"/>
   <path fill="#4b0096" d="M1199 376h6v299h-3z"/>
   <path fill="#5a00b0" d="M1203 275l66-1 1 401h-65z"/>
   <path fill="#7200e4" d="M1199 250l64-2 5 26-65 2z"/><path d="M1234 258l3 14" stroke="#200050" stroke-dasharray="2 3"/>
   <path d="m1294 428 71 37" stroke="#505050" stroke-width="1.500"/>
   <g fill="none" stroke="#fff" stroke-opacity=".45"><circle cx="791" cy="421.500" r="225"/><circle cx="791" cy="196" r="14"/><circle cx="565.500" cy="421.500" r="14"/><circle cx="1016" cy="421.500" r="14"/><circle cx="791" cy="647" r="14"/><path d="M777 196.500h28M777 646.500h28M566 407v28M1016 407v28"/></g>
   <path d="M271 624l-4-13M264 608l4-4 3 1" stroke="#0f0" stroke-width="2" fill="none"/>
   <path d="M272 624l37-1" stroke="#f00" stroke-width="4"/><path d="M309 618l12 5-12 5z" fill="#f00"/>
   <path d="M272 625v-34" stroke="#0080ff" stroke-width="4"/><path d="M268 592l4-12 4 12z" fill="#0080ff"/>
   <path d="M258 576h8l-8 9h9" stroke="#0080ff" fill="none"/><path d="M277 603l5 4 4-4M282 607v5" stroke="#0f0" fill="none"/><path d="M308 612l9 10M317 612l-9 10" stroke="#f00"/>
  </svg>

  <div class="row snaps">
   <div class="panel"><i class="grip"></i>
    <button class="tb"><svg class="ic"><use href="#ortho"/></svg>正交</button>
    <button class="tb on"><svg class="ic"><use href="#snap"/></svg>对象捕捉</button>
    <button class="tb"><svg class="ic"><use href="#dyn"/></svg>动态输入</button>
   </div>
   <div class="panel"><i class="grip"></i>
    <button class="tb"><svg class="ic"><use href="#cross"/></svg>交点</button>
    <button class="tb on"><svg class="ic"><use href="#perp"/></svg>垂点</button>
    <button class="tb on"><svg class="ic"><use href="#mid"/></svg>中点</button>
    <button class="tb"><svg class="ic"><use href="#vertex"/></svg>顶点</button>
    <button class="tb"><svg class="ic"><use href="#coord"/></svg>坐标</button>
   </div>
   <div class="panel offs"><i class="grip"></i>
    <span class="combo short"><select aria-label="偏移方式"><option>不偏移</option></select></span>
    <hr>
    <label for="ox">X=</label><span class="spin"><input id="ox" value="0"></span><span class="unit">mm</span>
    <label for="oy">Y=</label><span class="spin"><input id="oy" value="0"></span><span class="unit">mm</span>
    <hr>
    <input type="checkbox" id="rot"><label class="dark" for="rot">旋转</label>
    <span class="spin wide"><input aria-label="旋转角度" value="0.000"></span><span class="unit">°</span>
   </div>
  </div>
 </main>
</div>

<footer class="status"><span class="s1">X=83547 Y=-5728</span><span class="s2"><b>层高</b>:2.8m</span><span class="s3"><b>底标高</b>:20.35m</span><span class="s4">0</span><span class="s5"></span><span class="s6">440.9 FPS</span></footer>

<div class="taskbar">
 <button class="start" aria-label="开始"><svg viewBox="0 0 16 16"><path d="M0 2.500 7 1.500v6H0zM8 1.300 16 0v7.500H8zM0 8.500h7v6l-7-1zM8 8.500h8V16l-8-1.300z" fill="#fff"/></svg></button>
 <label class="search"><svg class="ring" viewBox="0 0 22 22"><circle cx="11" cy="11" r="9" fill="none" stroke="#fff" stroke-width="3"/></svg><input placeholder="在这里输入你要搜索的内容"><svg class="mic" viewBox="0 0 12 18"><rect x="3.500" y=".5" width="5" height="11" rx="2.500" fill="none" stroke="#aaa"/><path d="M1 8v3c0 3 10 3 10 0V8M6 14v3M3 17h6" fill="none" stroke="#aaa"/></svg></label>
 <button class="app" aria-label="任务视图"><svg viewBox="0 0 24 24"><path d="M6.500 5.500h11v13h-11zM4 7.500H2.500v9H4M20 7.500h1.500v9H20" fill="none" stroke="#fff" stroke-width="1.300"/></svg></button>
 <div class="apps wideapps">
  <button class="app" aria-label="风扇"><svg viewBox="0 0 24 24"><g fill="#f0f0f0"><path d="M11 11H5C0 11 1 4 5 2c4-2 7 0 6 9z"/><path d="M13 11V5c0-5 7-4 9 0 2 4 0 7-9 6z"/><path d="M13 13h6c5 0 4 7 0 9-4 2-7 0-6-9z"/><path d="M11 13v6c0 5-7 4-9 0-2-4 0-7 9-6z"/><path d="M8 8h8v8H8z"/></g><path d="M12 12c0-4 2-5 5-5M12 12c4 0 5 2 5 5M12 12c0 4-2 5-5 5M12 12c-4 0-5-2-5-5" fill="none" stroke="#00080b" stroke-width="1.200"/></svg></button>
  <button class="app" aria-label="浏览器"><svg viewBox="0 0 24 24"><path d="M20 17c-3 6-14 5-14-4 0-8 13-10 14 1H8" fill="none" stroke="#f0f0f0" stroke-width="3.500"/><path d="M3 22C-1 18 14 0 22 2M3 22c2 1 4 0 6-2" fill="none" stroke="#f0f0f0" stroke-width="1.300"/></svg></button>
  <button class="app" aria-label="G浏览器"><svg viewBox="0 0 24 24"><path d="M20 4c-3 3-8-1-13 3-6 6-1 14 6 13 7-1 8-9 2-9-5 0-5 5-1 5M20 4c0 4-3 4-7 4-6 0-7 5-3 8" fill="none" stroke="#e8e8e8" stroke-width="1.300"/></svg></button>
 </div>
 <div class="apps">
  <button class="app" aria-label="Edge"><svg viewBox="0 0 24 24"><path d="M2 11C4-1 22-1 22 11v3H9c0 6 7 6 12 4v4C11 26 2 20 5 13c1-2 3-4 5-4-1 1-1 2-1 2h7c0-8-11-6-14 0z" fill="#0878d8"/></svg></button>
  <button class="app" aria-label="IE"><svg viewBox="0 0 24 24"><path d="M20 16c-3 7-14 5-14-3s13-10 14 1H8" fill="none" stroke="#40a8f0" stroke-width="4"/><path d="M3 22C-2 18 15 0 22 2c2 1 1 4 0 6M3 22c2 1 4 0 6-2" fill="none" stroke="#f8c820" stroke-width="2"/></svg></button>
  <button class="app run" aria-label="资源管理器"><svg viewBox="0 0 24 24"><path d="M1 3h9l1 2h12v16H1z" fill="#f8d878"/><path d="M1 7h22v3H1z" fill="#ffe8a0"/><path d="M5 14h14v8h-4v-4H9v4H5z" fill="#38a8e8"/></svg></button>
  <button class="app run" aria-label="广联达G"><svg viewBox="0 0 24 24"><path d="M23 2c-3 2-8-2-14 1-9 4-9 15-1 18 8 4 15 1 14-6-1-5-8-5-9-1 3-1 4 3 1 4-4 1-7-2-6-6 2-5 14-1 15-10z" fill="url(#flame)"/></svg></button>
  <button class="app run" aria-label="安全浏览器"><svg viewBox="0 0 24 24"><circle cx="12" cy="12" r="10.500" fill="#58b828" stroke="#d8f0c0" stroke-width="1.500"/><path d="M18 15c-2 5-11 4-11-3s10-7 11 1H8" fill="none" stroke="#fff" stroke-width="2.500"/><path d="M2 21C0 17 14 3 23 2" fill="none" stroke="#38a018" stroke-width="1.500"/></svg></button>
  <button class="app run cur" aria-label="广联达BIM"><svg viewBox="0 0 16 16"><use href="#app"/></svg></button>
  <button class="app run" aria-label="便笺"><svg viewBox="0 0 24 24"><rect width="24" height="24" rx="3" fill="#f8a018"/><path d="m3 6 11-3 4 14-11 4z" fill="#fff8e0"/><path d="m6 8 6-2M7 11l7-2M8 14l6-2" stroke="#a07030" stroke-width="1.300"/><path d="m22 2-8 13-2 4" stroke="#a03c18" stroke-width="2.500" fill="none"/></svg></button>
 </div>
 <div class="tray">
  <span class="link">链接</span>
  <svg class="t14" viewBox="0 0 14 14"><path d="m1 10 6-6 6 6" fill="none" stroke="#fff" stroke-width="1.500"/></svg>
  <svg class="t16 bat" viewBox="0 0 16 16"><path d="M0 4h5M1 2v5h3V2M2.500 7v4H5" stroke="#fff" fill="none"/><path d="M5.500 5.500h9v6h-9z" fill="#fff" stroke="#fff"/><path d="M15 7h1v3h-1z" fill="#fff"/></svg>
  <svg class="t16" viewBox="0 0 16 16"><path d="M2 15C2 8 7 3 14 3M5 15c0-5 4-9 9-9M8 15c0-3 3-6 6-6" fill="none" stroke="#ddd" stroke-width="1.300"/><circle cx="12.500" cy="13.500" r="1.500" fill="#fff"/></svg>
  <svg class="t16" viewBox="0 0 16 16"><path d="M1 6h3l4-4v12l-4-4H1zM10 6c1 1 1 3 0 4M12 4c2 2 2 6 0 8" fill="none" stroke="#fff"/><path d="M14 2c3 3 3 9 0 12" fill="none" stroke="#888"/></svg>
  <svg class="kb" viewBox="0 0 24 16"><path d="M1.500 2.500h21v12h-21z" fill="none" stroke="#fff"/><path d="M4 5.500h16M4 8.500h16" stroke="#fff" stroke-dasharray="2 1"/><path d="M7 11.500h10" stroke="#fff"/></svg>
  <span class="lang">英</span>
  <svg class="t16"><use href="#sogou"/></svg>
  <time>13:15<br>2018/7/16</time>
  <button class="note" aria-label="1 条通知"><svg viewBox="0 0 26 26"><path d="M1 2h16v13h-6l-4 4v-4H1z" fill="#fff"/><path d="M4 5.500h10M4 8.500h10M4 11.500h7" stroke="#000"/><circle cx="16" cy="17" r="8" fill="#303438" stroke="#707478"/></svg><b>1</b></button>
 </div>
</div>
</body>
</html>
```

FILE: styles.css
```css
* { box-sizing: border-box; }
body {
  margin: 0;
  min-height: 100vh;
  height: 100vh;
  display: flex;
  flex-direction: column;
  overflow: hidden;
  background: #f0f0f0;
  color: #000;
  font: 12px/16px "Noto Sans", "Noto Sans CJK SC", sans-serif;
}
button, input, select { font: inherit; color: inherit; }
button { border: 0; padding: 0; background: none; white-space: nowrap; }
h1, h2, ul { margin: 0; padding: 0; font: inherit; list-style: none; }
.sprite { position: absolute; width: 0; height: 0; }
.ic { width: 16px; height: 16px; flex: none; }

/* title bar */
.title { position: relative; flex: none; height: 23px; display: flex; align-items: center; gap: 5px; padding: 0 2px; background: #fff; }
.title h1 { flex: 1; white-space: nowrap; }
.title h1 span { font: 13px/16px Roboto, sans-serif; }
.winbtns { display: flex; }
.winbtns button { width: 46px; height: 20px; display: grid; place-items: center; }
.winbtns svg { width: 12px; height: 12px; fill: none; stroke: #000; }
.orb { position: absolute; left: 963px; top: -56px; width: 64px; height: 64px; border-radius: 50%; background: #40b850; }
.ime { position: absolute; z-index: 2; left: 972px; top: 3px; width: 203px; height: 24px; display: flex; align-items: center; gap: 6px; padding-left: 29px; background: #fff; border: 1px solid #a8bcd8; }
.ime svg { width: 16px; height: 16px; }
.ime b { width: 16px; font-size: 14px; color: #1c74c8; }
.ime .logo { position: absolute; left: -5px; top: -4px; width: 28px; height: 28px; }

/* shared toolbar parts */
.row { flex: none; display: flex; gap: 4px; }
.panel { display: flex; align-items: center; gap: 1px; border-radius: 3px; background: linear-gradient(#fcfcfc, #f2f2f2); }
.tb { display: flex; align-items: center; gap: 4px; height: 24px; padding: 0 3px; }
.tb:disabled { color: #8c8c8c; }
.tb.on { padding: 0 2px; background: #deebf6; border: 1px solid #0078d7; }
.tb.deep { background: #b4d4f0; }
.tb.white { background: #fff; }
.dd { border: 3px solid transparent; border-top-color: #000; border-bottom: 0; margin-left: -2px; }
.dd.far { margin-left: 2px; }
.panel hr { width: 1px; height: 14px; margin: 0 2px; border: 0; background: #b8b8b8; }
.more { margin-left: auto; align-self: flex-start; font: bold 14px/14px "Noto Sans", sans-serif; padding-right: 3px; }
.grip { width: 2px; height: 14px; margin: 0 0 0 5px; background: repeating-linear-gradient(#b8b8b8 0 2px, transparent 2px 4px); }
.combo { position: relative; display: flex; width: 69px; height: 22px; margin-right: 2px; background: linear-gradient(90deg, #fff 83%, #f2f2f2 83%); }
.combo.short { width: 57px; }
.combo::after { content: ""; position: absolute; right: 3px; top: 10px; border: 3px solid transparent; border-top-color: #000; border-bottom: 0; pointer-events: none; }
.combo select { flex: 1; min-width: 0; appearance: none; border: 0; padding: 0 2px; background: transparent; }

/* menu bar */
.menu { flex: none; height: 31px; display: flex; align-items: center; gap: 2px; }
.menus { display: flex; gap: 11px; padding: 0 7px; }
.menu .tip { align-self: stretch; flex: 0 0 185px; margin: 1px 0 2px 1px; padding: 0 29px; color: #603000; text-decoration: none; white-space: nowrap; line-height: 28px; background: linear-gradient(#fcfcfc, #f2f2f2); }
.menu .acct { flex: 1; align-self: stretch; gap: 3px; margin: 1px 0 2px 2px; }

/* main toolbar */
.main { height: 30px; padding-right: 3px; gap: 3px; }
.files { flex: 0 0 148px; padding-left: 2px; }
.calc { flex: 0 0 550px; padding-left: 3px; }
.views { flex: 1; }

/* work area */
.work { flex: 1; min-height: 0; display: flex; gap: 4px; }
.side { flex: 0 0 213px; min-height: 0; display: flex; flex-direction: column; padding-bottom: 2px; }
.sidehead { flex: none; display: flex; align-items: center; height: 16px; margin-bottom: 1px; padding-right: 3px; gap: 6px; background: #0054e3; color: #fff; }
.sidehead h2 { flex: 1; font-size: 13px; line-height: 15px; }
.sidehead svg { width: 12px; height: 12px; fill: none; stroke: #fff; }
.nav { flex: none; height: 22px; margin: 0 1px 0 0; border: 1px solid #a0a0a0; border-width: 1px 2px 1px 1px; background: #f0f0f0; }
.treebar { flex: none; display: flex; gap: 5px; padding: 4px 6px; height: 27px; margin-right: 2px; border: 1px solid #a0a0a0; border-bottom: 0; background: linear-gradient(#fcfcfc, #f0f0f0); }
.treebar svg { width: 18px; height: 18px; display: block; }
.treebox { flex: 1; min-height: 0; margin: 0 2px 2px 1px; border: 1px solid #828790; border-width: 1px 1px 1px 2px; display: flex; background: #fff; overflow: hidden; }
.tree { flex: 1; padding: 1px 0 0 5px; overflow: hidden; }
.tree li { position: relative; }
.node { display: flex; align-items: center; gap: 4px; height: 16px; padding-left: 18px; }
.node::before { content: ""; position: absolute; left: 3px; top: 4px; width: 6px; height: 6px; border: solid #404040; border-width: 0 2px 2px 0; transform: scale(.8) rotate(45deg); }
.shut > .node::before { left: 1px; top: 5px; border-color: #a0a0a0; transform: scale(.8) rotate(-45deg); }
.open > ul { margin-left: 6px; padding-left: 18px; border-left: 1px dotted #808080; }
.open > ul > li { height: 16px; padding-left: 9px; border-left: 1px dotted #808080; }
.open > ul > li::before { content: ""; position: absolute; left: 0; top: 8px; width: 10px; border-top: 1px dotted #808080; }
.leaf { display: inline-flex; align-items: center; gap: 4px; height: 16px; padding: 0 5px 0 2px; vertical-align: top; }
.leaf.sel { background: #d9d9d9; }
.tree kbd { margin-left: -4px; font: 10px/16px "Liberation Mono", monospace; }
.scroll { flex: 0 0 17px; display: flex; flex-direction: column; border-right: 2px solid #fff; background: #f0f0f0; }
.scroll svg { width: 15px; height: 17px; fill: none; stroke: #505050; stroke-width: 2; }
.scroll .thumb { flex: 0 0 56%; background: #cdcdcd; margin-bottom: auto; }

.canvas { flex: 1; min-width: 0; display: flex; flex-direction: column; padding-right: 1px; }
.edit { height: 26px; margin-bottom: 2px; }
.edit .panel, .pick .panel { padding-right: 2px; }
.pick { height: 24px; margin-bottom: 4px; }
.draw { height: 28px; padding-right: 2px; }
.grow { flex: 1; min-width: 0; }
.stub { flex: 0 0 30px; }
.scene { flex: 1; min-height: 0; width: 100%; display: block; }
.axisno { font: bold 13px "DejaVu Sans Mono", monospace; text-anchor: middle; }
.snaps { height: 30px; margin-bottom: 3px; gap: 2px; }
.snaps .panel { padding-right: 2px; }
.snaps .offs { color: #808080; font-size: 13px; padding-right: 5px; }
.offs select, .offs .dark { color: #000; font-size: 12px; }
.offs .dark { margin: 0 3px; }
.offs input[type="checkbox"] { appearance: none; width: 12px; height: 12px; margin: 0 2px; border: 1px solid #a0a0a0; background: #f6f6f6; }
.spin { position: relative; width: 58px; height: 23px; border: 1px solid #707070; background: #f8f8f8; }
.spin.wide { width: 68px; }
.spin input { width: 100%; height: 21px; border: 0; padding: 0 18px 0 0; text-align: right; background: transparent; }
.spin::before, .spin::after { content: ""; position: absolute; right: 4px; border: 3px solid transparent; }
.spin::before { top: 3px; border-top: 0; border-bottom-color: #505050; }
.spin::after { bottom: 3px; border-bottom: 0; border-top-color: #505050; }
.unit { margin-right: 2px; }

/* status bar */
.status { flex: none; height: 20px; display: flex; gap: 2px; font: 10px/19px "Liberation Mono", "Noto Sans CJK SC", monospace; background: #f8f8f8; }
.status span { border: 1px solid #d0d0d0; border-bottom: 0; padding-left: 1px; background: #fafafa; white-space: nowrap; }
.status b { font: 12px/18px "Noto Sans CJK SC", sans-serif; }
.s1 { flex: 0 0 148px; }
.s2 { flex: 0 0 78px; }
.s3 { flex: 0 0 98px; }
.s4 { flex: 0 0 48px; }
.s5 { flex: 1; }
.s6 { flex: 0 0 70px; }

/* taskbar */
.taskbar { flex: none; height: 40px; display: flex; background: #000a0d; color: #fff; }
.start { width: 48px; display: grid; place-items: center; background: #000; }
.start svg { width: 16px; height: 16px; }
.search { flex: 0 0 344px; display: flex; align-items: center; gap: 5px; padding: 0 14px 0 9px; background: #333; }
.search .ring { width: 22px; height: 22px; }
.search input { flex: 1; min-width: 0; border: 0; padding: 0; outline: 0; background: none; font-size: 14px; }
.search input::placeholder { color: #a0a0a0; opacity: 1; }
.mic { width: 12px; height: 18px; }
.apps { display: flex; }
.app { width: 49px; display: grid; place-items: center; border-bottom: 2px solid transparent; }
.app svg { width: 24px; height: 24px; }
.wideapps { margin-right: 2px; }
.wideapps .app { width: 51px; }
.app.run { border-bottom-color: #76b9ed; background-clip: padding-box; }
.app.cur { background: #33393c; }
.tray { margin-left: auto; display: flex; align-items: center; gap: 7px; }
.t14 { width: 14px; height: 14px; }
.t16 { width: 16px; height: 16px; }
.kb { width: 24px; height: 16px; }
.link { margin-right: 4px; }
.bat { margin-left: 28px; }
.lang { font-size: 13px; margin: 0 6px 0 2px; }
.tray time { width: 70px; text-align: center; line-height: 18px; }
.note { position: relative; width: 48px; height: 40px; display: grid; place-items: center; padding-right: 10px; }
.note svg { width: 26px; height: 26px; }
.note b { position: absolute; left: 18px; top: 16px; font-size: 12px; line-height: 16px; }
```
